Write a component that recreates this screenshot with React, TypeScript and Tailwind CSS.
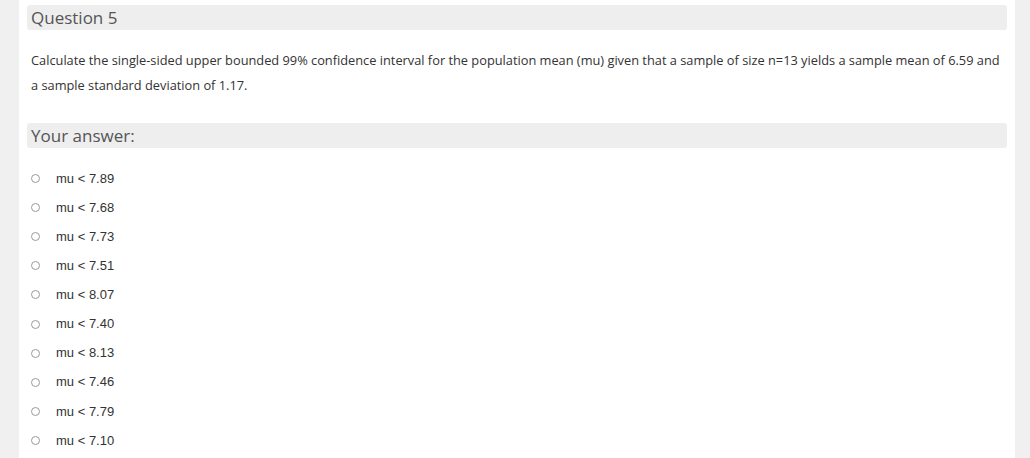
const options = ["7.89", "7.68", "7.73", "7.51", "8.07", "7.40", "8.13", "7.46", "7.79", "7.10"];

export default function App() {
  return (
    <div className="flex h-[458px] w-[1030px] overflow-hidden bg-[#f0f0f0] font-['Open_Sans',sans-serif]">
      <div className="w-[19px] shrink-0" />
      <div className="w-[996px] shrink-0 bg-white px-[8px] pt-[5px]">
        <div className="h-[25px] rounded-[3px] bg-[#eeeeee] px-[4px] text-[17px] leading-[25px] text-[#555]">
          Question 5
        </div>
        <p className="mt-[18px] pl-[4px] pr-[2px] text-[12.8px] leading-[25px] text-[#333]">
          Calculate the single-sided upper bounded 99% confidence interval for the population mean (mu) given that a sample of size n=13 yields a sample mean of 6.59 and a sample standard deviation of 1.17.
        </p>
        <div className="mt-[25px] h-[25px] rounded-[3px] bg-[#eeeeee] px-[4px] text-[17px] leading-[25px] text-[#555]">
          Your answer:
        </div>
        <div className="mt-[16px]">
          {options.map((v) => (
            <label key={v} className="flex h-[29.1px] items-center">
              <span className="ml-[4px] h-[9px] w-[9px] rounded-full border border-[#9a9a9a] bg-white" />
              <span className="ml-[16px] font-['Liberation_Sans',sans-serif] text-[13px] text-[#333]">
                mu &lt; {v}
              </span>
            </label>
          ))}
        </div>
      </div>
    </div>
  );
}
